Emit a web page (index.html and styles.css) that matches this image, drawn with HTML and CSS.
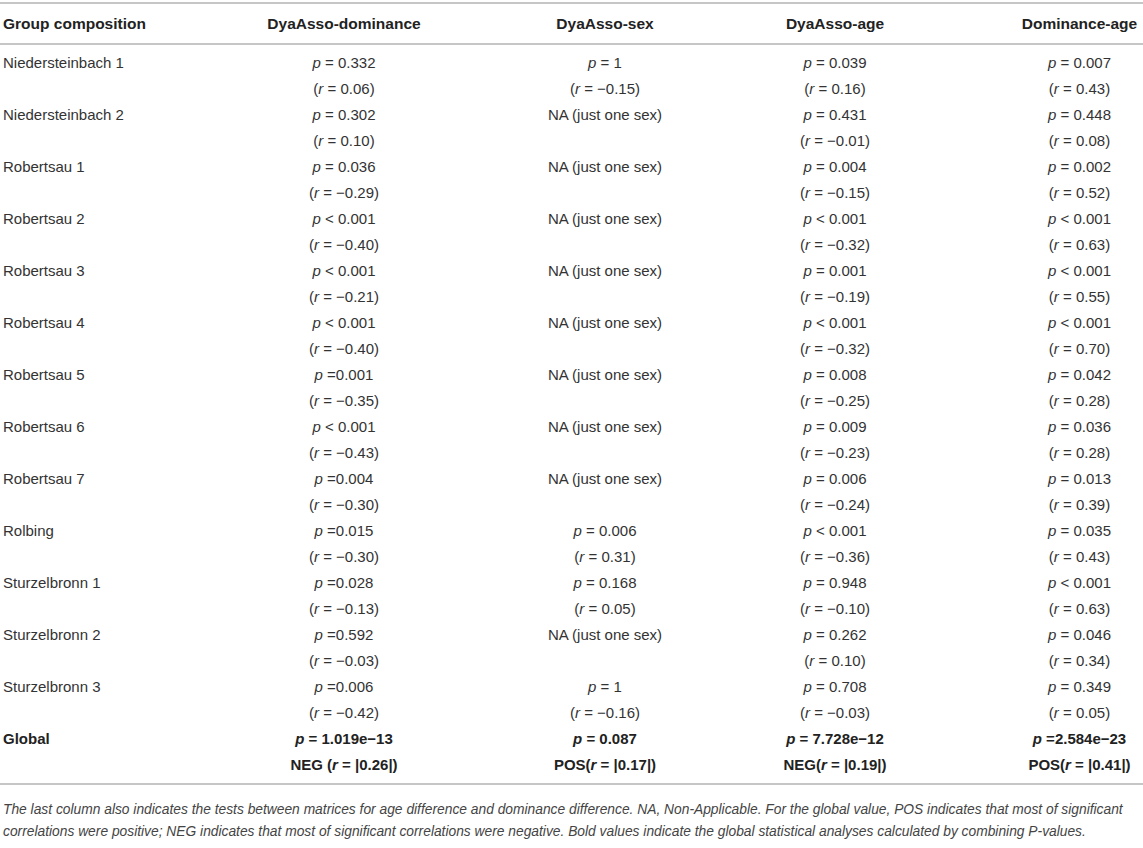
FILE: index.html
```html
<!DOCTYPE html>
<html lang="en">
<head>
<meta charset="utf-8">
<title>Table</title>
<link rel="stylesheet" href="styles.css">
</head>
<body>
<div class="page">
<table class="tbl">
<colgroup><col class="w1"><col class="w2"><col class="w3"><col class="w4"><col class="w5"></colgroup>
<thead>
<tr><th class="c1">Group composition</th><th class="c2">DyaAsso-dominance</th><th class="c3">DyaAsso-sex</th><th class="c4">DyaAsso-age</th><th class="c5">Dominance-age</th></tr>
</thead>
<tbody>
<tr><td class="c1">Niedersteinbach 1</td><td class="c2"><span class="ln"><i>p</i> = 0.332</span><span class="ln">(<i>r</i> = 0.06)</span></td><td class="c3"><span class="ln"><i>p</i> = 1</span><span class="ln">(<i>r</i> = −0.15)</span></td><td class="c4"><span class="ln"><i>p</i> = 0.039</span><span class="ln">(<i>r</i> = 0.16)</span></td><td class="c5"><span class="ln"><i>p</i> = 0.007</span><span class="ln">(<i>r</i> = 0.43)</span></td></tr>
<tr><td class="c1">Niedersteinbach 2</td><td class="c2"><span class="ln"><i>p</i> = 0.302</span><span class="ln">(<i>r</i> = 0.10)</span></td><td class="c3"><span class="ln">NA (just one sex)</span><span class="ln">&nbsp;</span></td><td class="c4"><span class="ln"><i>p</i> = 0.431</span><span class="ln">(<i>r</i> = −0.01)</span></td><td class="c5"><span class="ln"><i>p</i> = 0.448</span><span class="ln">(<i>r</i> = 0.08)</span></td></tr>
<tr><td class="c1">Robertsau 1</td><td class="c2"><span class="ln"><i>p</i> = 0.036</span><span class="ln">(<i>r</i> = −0.29)</span></td><td class="c3"><span class="ln">NA (just one sex)</span><span class="ln">&nbsp;</span></td><td class="c4"><span class="ln"><i>p</i> = 0.004</span><span class="ln">(<i>r</i> = −0.15)</span></td><td class="c5"><span class="ln"><i>p</i> = 0.002</span><span class="ln">(<i>r</i> = 0.52)</span></td></tr>
<tr><td class="c1">Robertsau 2</td><td class="c2"><span class="ln"><i>p</i> &lt; 0.001</span><span class="ln">(<i>r</i> = −0.40)</span></td><td class="c3"><span class="ln">NA (just one sex)</span><span class="ln">&nbsp;</span></td><td class="c4"><span class="ln"><i>p</i> &lt; 0.001</span><span class="ln">(<i>r</i> = −0.32)</span></td><td class="c5"><span class="ln"><i>p</i> &lt; 0.001</span><span class="ln">(<i>r</i> = 0.63)</span></td></tr>
<tr><td class="c1">Robertsau 3</td><td class="c2"><span class="ln"><i>p</i> &lt; 0.001</span><span class="ln">(<i>r</i> = −0.21)</span></td><td class="c3"><span class="ln">NA (just one sex)</span><span class="ln">&nbsp;</span></td><td class="c4"><span class="ln"><i>p</i> = 0.001</span><span class="ln">(<i>r</i> = −0.19)</span></td><td class="c5"><span class="ln"><i>p</i> &lt; 0.001</span><span class="ln">(<i>r</i> = 0.55)</span></td></tr>
<tr><td class="c1">Robertsau 4</td><td class="c2"><span class="ln"><i>p</i> &lt; 0.001</span><span class="ln">(<i>r</i> = −0.40)</span></td><td class="c3"><span class="ln">NA (just one sex)</span><span class="ln">&nbsp;</span></td><td class="c4"><span class="ln"><i>p</i> &lt; 0.001</span><span class="ln">(<i>r</i> = −0.32)</span></td><td class="c5"><span class="ln"><i>p</i> &lt; 0.001</span><span class="ln">(<i>r</i> = 0.70)</span></td></tr>
<tr><td class="c1">Robertsau 5</td><td class="c2"><span class="ln"><i>p</i> =0.001</span><span class="ln">(<i>r</i> = −0.35)</span></td><td class="c3"><span class="ln">NA (just one sex)</span><span class="ln">&nbsp;</span></td><td class="c4"><span class="ln"><i>p</i> = 0.008</span><span class="ln">(<i>r</i> = −0.25)</span></td><td class="c5"><span class="ln"><i>p</i> = 0.042</span><span class="ln">(<i>r</i> = 0.28)</span></td></tr>
<tr><td class="c1">Robertsau 6</td><td class="c2"><span class="ln"><i>p</i> &lt; 0.001</span><span class="ln">(<i>r</i> = −0.43)</span></td><td class="c3"><span class="ln">NA (just one sex)</span><span class="ln">&nbsp;</span></td><td class="c4"><span class="ln"><i>p</i> = 0.009</span><span class="ln">(<i>r</i> = −0.23)</span></td><td class="c5"><span class="ln"><i>p</i> = 0.036</span><span class="ln">(<i>r</i> = 0.28)</span></td></tr>
<tr><td class="c1">Robertsau 7</td><td class="c2"><span class="ln"><i>p</i> =0.004</span><span class="ln">(<i>r</i> = −0.30)</span></td><td class="c3"><span class="ln">NA (just one sex)</span><span class="ln">&nbsp;</span></td><td class="c4"><span class="ln"><i>p</i> = 0.006</span><span class="ln">(<i>r</i> = −0.24)</span></td><td class="c5"><span class="ln"><i>p</i> = 0.013</span><span class="ln">(<i>r</i> = 0.39)</span></td></tr>
<tr><td class="c1">Rolbing</td><td class="c2"><span class="ln"><i>p</i> =0.015</span><span class="ln">(<i>r</i> = −0.30)</span></td><td class="c3"><span class="ln"><i>p</i> = 0.006</span><span class="ln">(<i>r</i> = 0.31)</span></td><td class="c4"><span class="ln"><i>p</i> &lt; 0.001</span><span class="ln">(<i>r</i> = −0.36)</span></td><td class="c5"><span class="ln"><i>p</i> = 0.035</span><span class="ln">(<i>r</i> = 0.43)</span></td></tr>
<tr><td class="c1">Sturzelbronn 1</td><td class="c2"><span class="ln"><i>p</i> =0.028</span><span class="ln">(<i>r</i> = −0.13)</span></td><td class="c3"><span class="ln"><i>p</i> = 0.168</span><span class="ln">(<i>r</i> = 0.05)</span></td><td class="c4"><span class="ln"><i>p</i> = 0.948</span><span class="ln">(<i>r</i> = −0.10)</span></td><td class="c5"><span class="ln"><i>p</i> &lt; 0.001</span><span class="ln">(<i>r</i> = 0.63)</span></td></tr>
<tr><td class="c1">Sturzelbronn 2</td><td class="c2"><span class="ln"><i>p</i> =0.592</span><span class="ln">(<i>r</i> = −0.03)</span></td><td class="c3"><span class="ln">NA (just one sex)</span><span class="ln">&nbsp;</span></td><td class="c4"><span class="ln"><i>p</i> = 0.262</span><span class="ln">(<i>r</i> = 0.10)</span></td><td class="c5"><span class="ln"><i>p</i> = 0.046</span><span class="ln">(<i>r</i> = 0.34)</span></td></tr>
<tr><td class="c1">Sturzelbronn 3</td><td class="c2"><span class="ln"><i>p</i> =0.006</span><span class="ln">(<i>r</i> = −0.42)</span></td><td class="c3"><span class="ln"><i>p</i> = 1</span><span class="ln">(<i>r</i> = −0.16)</span></td><td class="c4"><span class="ln"><i>p</i> = 0.708</span><span class="ln">(<i>r</i> = −0.03)</span></td><td class="c5"><span class="ln"><i>p</i> = 0.349</span><span class="ln">(<i>r</i> = 0.05)</span></td></tr>
<tr class="global"><td class="c1">Global</td><td class="c2"><span class="ln"><i>p</i> = 1.019e−13</span><span class="ln">NEG (<i>r</i> = |0.26|)</span></td><td class="c3"><span class="ln"><i>p</i> = 0.087</span><span class="ln">POS(<i>r</i> = |0.17|)</span></td><td class="c4"><span class="ln"><i>p</i> = 7.728e−12</span><span class="ln">NEG(<i>r</i> = |0.19|)</span></td><td class="c5"><span class="ln"><i>p</i> =2.584e−23</span><span class="ln">POS(<i>r</i> = |0.41|)</span></td></tr>
</tbody>
</table>
<p class="note">The last column also indicates the tests between matrices for age difference and dominance difference. NA, Non-Applicable. For the global value, POS indicates that most of significant correlations were positive; NEG indicates that most of significant correlations were negative. Bold values indicate the global statistical analyses calculated by combining P-values.</p>
</div>
</body>
</html>
```

FILE: styles.css
```css
html, body {
  margin: 0;
  padding: 0;
  background: #ffffff;
}

body {
  font-family: "Liberation Sans", Arial, sans-serif;
  color: #333333;
}

.page {
  padding-top: 2px;
}

.tbl {
  width: 1143px;
  table-layout: fixed;
  border-collapse: collapse;
  font-size: 15px;
  line-height: 26px;
}

.w1 { width: 220px; }
.w2 { width: 240px; }
.w3 { width: 290px; }
.w4 { width: 170px; }
.w5 { width: 223px; }

.tbl thead th {
  font-size: 15.5px;
  font-weight: bold;
  color: #222222;
  padding: 7px 0 6px;
  border-top: 2px solid #c6c6c6;
  border-bottom: 2px solid #c6c6c6;
  white-space: nowrap;
}

.tbl td {
  vertical-align: top;
  padding: 0;
  white-space: nowrap;
}

.tbl tbody tr:first-child td { padding-top: 5px; }
.tbl tbody tr:last-child td {
  padding-bottom: 5px;
  border-bottom: 2px solid #c6c6c6;
}

.c1 { text-align: left; padding-left: 3px !important; }
.c2 { text-align: center; padding-left: 8px !important; }
.c3 { text-align: center; }
.c4 { text-align: center; }
.c5 { text-align: center; padding-left: 96px !important; }

.ln { display: block; }

.global td { font-weight: bold; color: #222222; }

.note {
  margin: 14px 0 0 0;
  padding: 0 0 0 3px;
  font-size: 13.8px;
  line-height: 22px;
  font-style: italic;
  color: #444444;
}
```
